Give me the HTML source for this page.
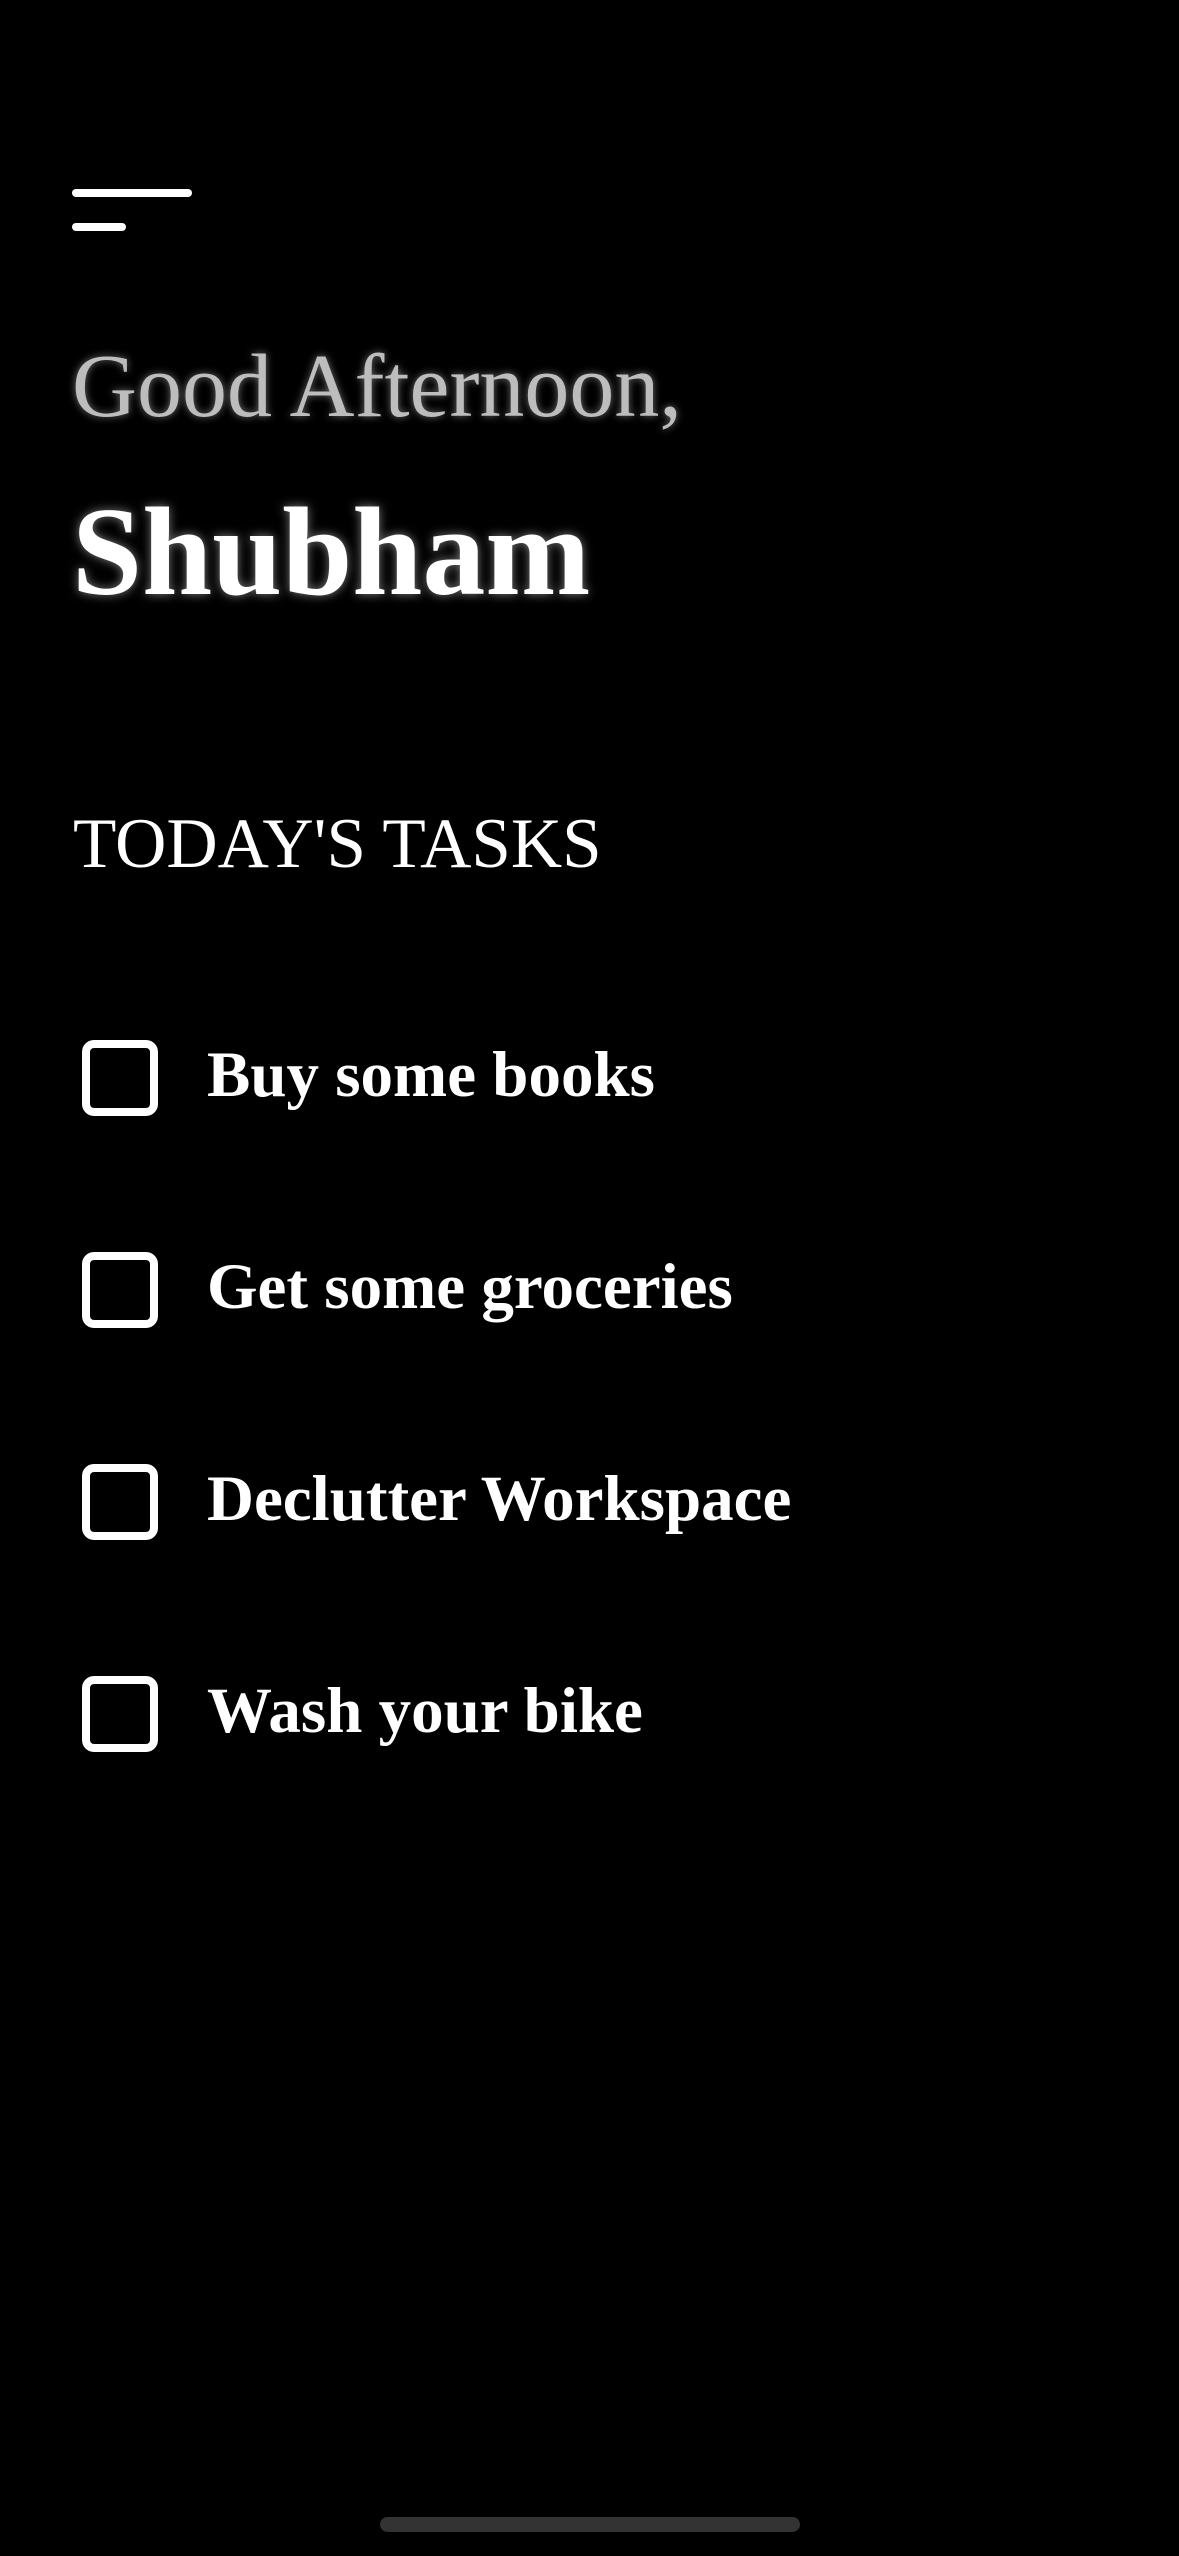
<!DOCTYPE html>
<html><head><meta charset="utf-8"><style>
html,body{margin:0;padding:0;background:#000;width:1179px;height:2556px;overflow:hidden;position:relative;font-family:"Liberation Serif",serif;color:#fff}
.a{position:absolute;white-space:nowrap;line-height:1}
.bar{position:absolute;background:#fff;border-radius:4px;height:8px}
.cb{position:absolute;left:82px;width:60px;height:60px;border:8px solid #fff;border-radius:12px}
.t{position:absolute;left:207px;font-weight:bold;font-size:65px;line-height:1}
</style></head><body>
<div class="bar" style="left:72px;top:189px;width:120px"></div>
<div class="bar" style="left:72px;top:223px;width:54px"></div>
<div class="a" style="left:72px;top:342px;font-size:90px;color:#bdbdbd;text-shadow:0 0 8px rgba(255,255,255,.45)">Good Afternoon,</div>
<div class="a" style="left:72px;top:490px;font-size:126px;font-weight:bold;text-shadow:0 0 10px rgba(255,255,255,.5)">Shubham</div>
<div class="a" style="left:73px;top:809px;font-size:71px">TODAY'S TASKS</div>
<div class="cb" style="top:1040px"></div><div class="t" style="top:1043px">Buy some books</div>
<div class="cb" style="top:1252px"></div><div class="t" style="top:1255px">Get some groceries</div>
<div class="cb" style="top:1464px"></div><div class="t" style="top:1467px">Declutter Workspace</div>
<div class="cb" style="top:1676px"></div><div class="t" style="top:1679px">Wash your bike</div>
<div style="position:absolute;left:380px;top:2517px;width:420px;height:15px;border-radius:8px;background:#333"></div>
</body></html>
